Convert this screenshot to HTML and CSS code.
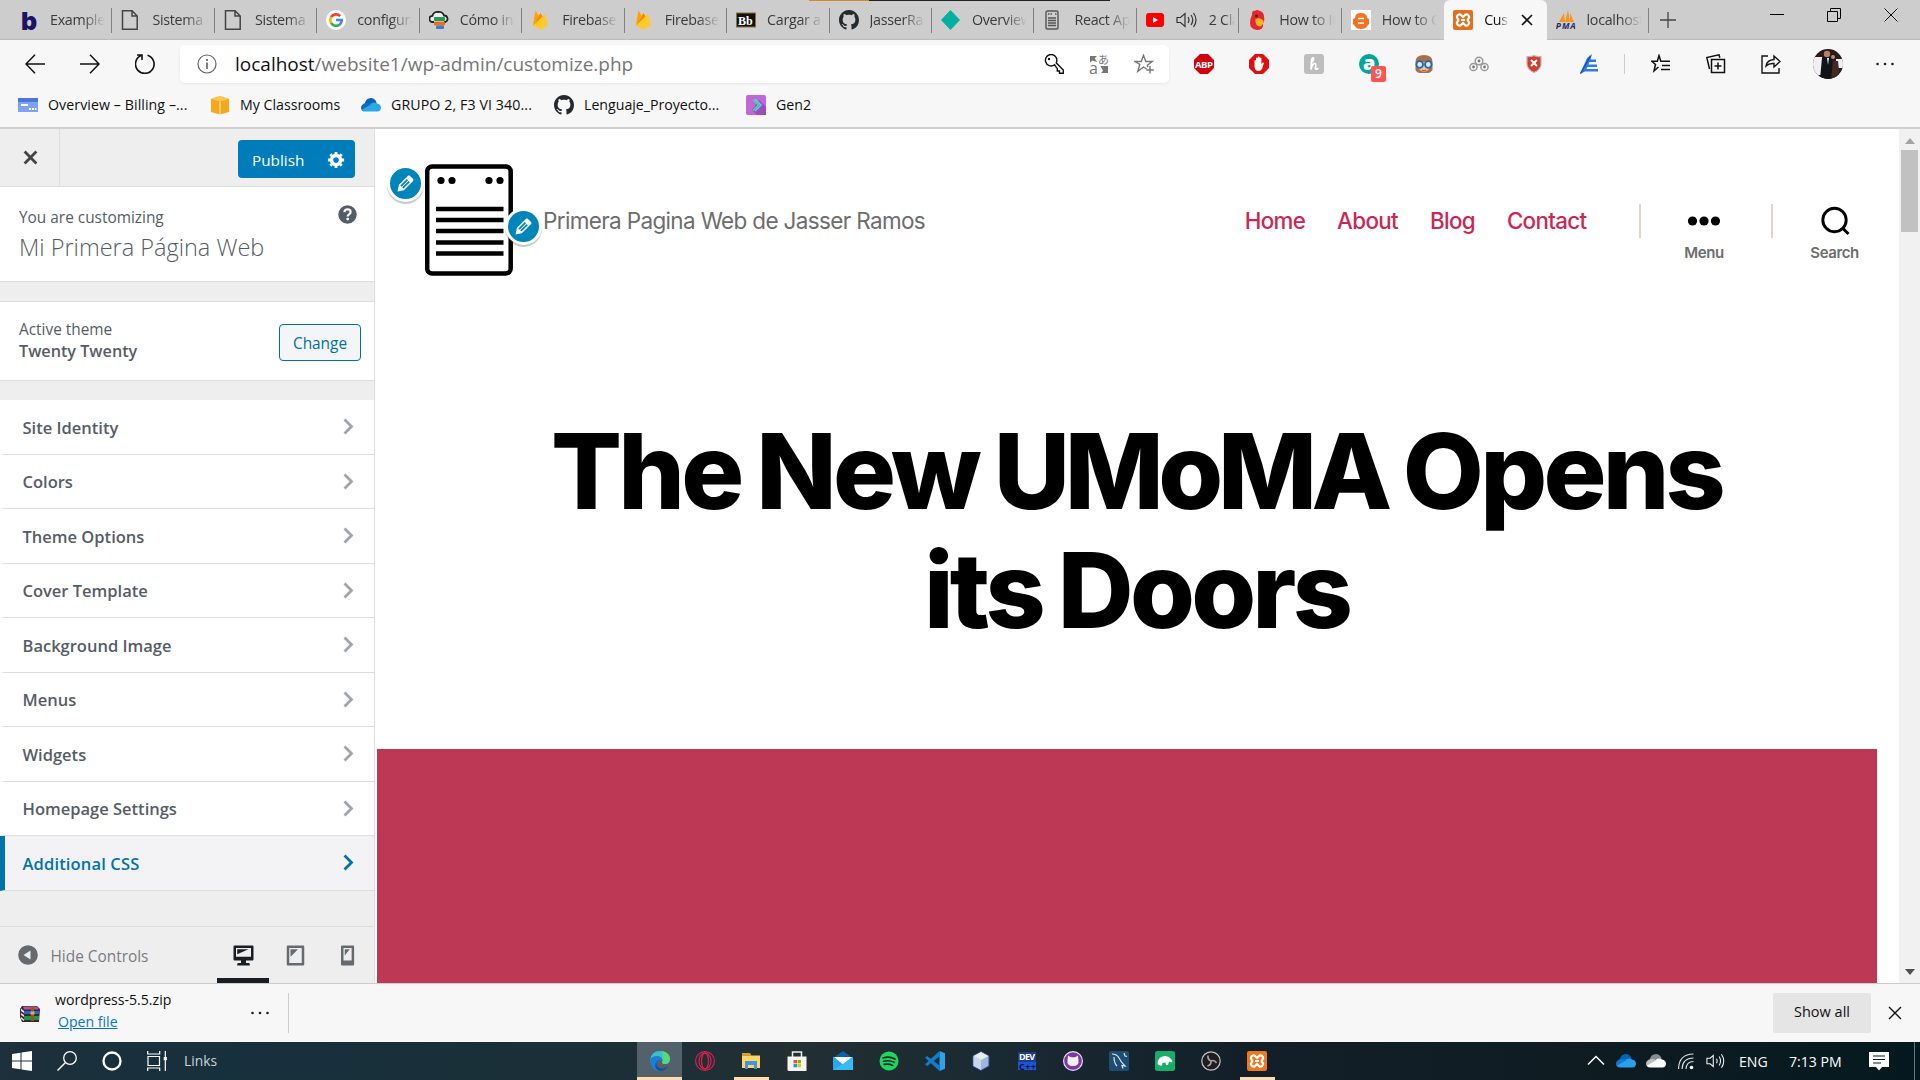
FILE: index.html
```html
<!DOCTYPE html>
<html lang="en">
<head>
<meta charset="utf-8">
<title>Customize: Mi Primera Página Web</title>
<link rel="stylesheet" href="styles.css">
</head>
<body>
<div class="screen">
  <header class="tabstrip">
    <div class="top-sliver"></div>
    <div class="tab"><svg class="fav" viewBox="0 0 20 20"><text x="2" y="19.500" class="glyph-b">b</text></svg><span class="tab-text">Example</span></div>
    <div class="tab"><svg class="fav" viewBox="0 0 20 20"><path d="M1.500 .7h9.500l5.200 5.300v13.300H1.500zM11 .7V6h5.200" fill="none" stroke="#444" stroke-width="1.500"/></svg><span class="tab-text">Sistema de</span></div>
    <div class="tab"><svg class="fav" viewBox="0 0 20 20"><path d="M1.500 .7h9.500l5.200 5.300v13.300H1.500zM11 .7V6h5.200" fill="none" stroke="#444" stroke-width="1.500"/></svg><span class="tab-text">Sistema</span></div>
    <div class="tab"><svg class="fav" viewBox="0 0 20 20"><circle cx="10" cy="10" r="10" fill="#fff"/><g fill="none" stroke-width="2.600"><path d="M14.200 6.200A5.800 5.800 0 0 0 5 7.200" stroke="#ea4335"/><path d="M5 7.200a5.800 5.800 0 0 0 0 5.600" stroke="#fbbc05"/><path d="M5 12.800a5.800 5.800 0 0 0 8.800 1.600" stroke="#34a853"/><path d="M10 10h5.800a5.800 5.800 0 0 1-2 4.400" stroke="#4285f4"/></g></svg><span class="tab-text">configurar</span></div>
    <div class="tab"><svg class="fav" viewBox="0 0 20 20"><path d="M5 12H3.500a3 3 0 0 1 0-6.200A5 5 0 0 1 9 2a5.200 5.200 0 0 1 6 3.500 3.400 3.400 0 0 1 1.500 6.500H15" fill="#eee" stroke="#222" stroke-width="1.800"/><rect x="5" y="7" width="11" height="4" rx="1" fill="#1f9b5c"/><rect x="5" y="11.500" width="11" height="4" rx="1" fill="#f06a1c"/><rect x="7" y="15.500" width="8" height="3.500" rx="1" fill="#3b7cc2"/></svg><span class="tab-text">Cómo instalar</span></div>
    <div class="tab"><svg class="fav" viewBox="0 0 20 20"><path d="M2 15.500 4.500.8l3 5L9.500 3l2 3.500 2.700-2.500L16.800 15.500 9.400 19.500z" fill="#ffc928"/><path d="M2 15.500 4.500.8l3 5z" fill="#ffa000"/><path d="m2 15.500 7.500-12.500 2 3.500z" fill="#f8890d"/></svg><span class="tab-text">Firebase c</span></div>
    <div class="tab"><svg class="fav" viewBox="0 0 20 20"><path d="M2 15.500 4.500.8l3 5L9.500 3l2 3.500 2.700-2.500L16.800 15.500 9.400 19.500z" fill="#ffc928"/><path d="M2 15.500 4.500.8l3 5z" fill="#ffa000"/><path d="m2 15.500 7.500-12.500 2 3.500z" fill="#f8890d"/></svg><span class="tab-text">Firebase</span></div>
    <div class="tab"><svg class="fav" viewBox="0 0 20 20"><rect x=".5" y="3" width="19" height="14" fill="#111" stroke="#8a7233"/><text x="2" y="14.500" class="glyph-bb">Bb</text></svg><span class="tab-text">Cargar a</span></div>
    <div class="tab"><svg class="fav" viewBox="0 0 16 16"><path fill="#24292e" d="M8 0C3.580 0 0 3.580 0 8c0 3.540 2.290 6.530 5.470 7.590.4.070.55-.17.55-.38 0-.19-.01-.82-.01-1.490-2.010.37-2.530-.49-2.690-.94-.09-.23-.48-.94-.82-1.130-.28-.15-.68-.52-.01-.53.63-.01 1.080.58 1.230.82.72 1.210 1.870.87 2.330.66.07-.52.28-.87.51-1.070-1.780-.2-3.640-.89-3.640-3.950 0-.87.31-1.590.82-2.150-.08-.2-.36-1.020.08-2.120 0 0 .67-.21 2.200.82.64-.18 1.320-.27 2-.27.68 0 1.360.09 2 .27 1.530-1.040 2.200-.82 2.200-.82.44 1.100.16 1.920.08 2.120.51.56.82 1.270.82 2.150 0 3.070-1.870 3.750-3.650 3.950.29.25.54.73.54 1.480 0 1.070-.01 1.930-.01 2.200 0 .21.15.46.55.38A8.013 8.013 0 0016 8c0-4.420-3.580-8-8-8z"/></svg><span class="tab-text">JasserRam</span></div>
    <div class="tab"><svg class="fav" viewBox="0 0 20 20"><path d="m9.500 0 9.500 10-9.500 10L0 10z" fill="#00b0a0"/></svg><span class="tab-text">Overview</span></div>
    <div class="tab"><svg class="fav" viewBox="0 0 20 20"><rect x="3" y="1" width="12" height="18" rx="1.500" fill="none" stroke="#555" stroke-width="1.400"/><path d="M5 4h1.500m1 0H9m3 0h1.500M5 8h8M5 10.500h8M5 13h8M5 15.500h8" stroke="#555" stroke-width="1.600"/></svg><span class="tab-text">React App</span></div>
    <div class="tab"><svg class="fav" viewBox="0 0 20 20"><rect x="0" y="3" width="18" height="14" rx="3" fill="#f00"/><path d="m7 7 5 3-5 3z" fill="#fff"/></svg><svg class="audio" viewBox="0 0 22 20"><path d="M1 7.500h3.500L9 3.500v13L4.500 12.500H1zM12 7q2 3 0 6M15 5q3.500 5 0 10M17.500 3q5 7 0 14" fill="none" stroke="#333" stroke-width="1.200"/></svg><span class="tab-text tab-short">2 Cla</span></div>
    <div class="tab"><svg class="fav" viewBox="0 0 20 20"><path d="M4 5Q4 0 7 1q1-2 5 0 4 1 4 6 1 4-1 6 1 7-6 7-7-1-7-7 0-4 2-8z" fill="#e7262b"/><path d="M7.500 9q4-2 8 1.500 0 6-4.500 6-4-1-3.500-7.500z" fill="#ffb51e"/><circle cx="8.500" cy="6" r="1.500" fill="#4a2030"/></svg><span class="tab-text">How to In</span></div>
    <div class="tab tab-plain"><svg class="fav" viewBox="0 0 20 20"><path fill="#fff" d="M0 0h20v20H0z"/><path d="M4 8q0-5 6-5t6 5l2 1v5l-2 2q-1 3-6 3t-6-3l-2-2V9z" fill="#f37321"/><path d="M7 8.500h6M7 13h6" stroke="#fff" stroke-width="1.500"/></svg><span class="tab-text">How to Cr</span></div>
    <div class="tab tab-active"><svg class="fav" viewBox="0 0 20 20"><rect width="20" height="20" rx="2" fill="#e2711d"/><path d="M6 4.500a2.500 2.500 0 0 0-1.500 4q1.500 1.500 0 3A2.500 2.500 0 0 0 8 15l2-2 2 2a2.500 2.500 0 0 0 3.500-3.500q-1.500-1.500 0-3A2.500 2.500 0 0 0 12 5l-2 2-2-2q-1-.7-2-.5zM8 10h4" fill="none" stroke="#fff" stroke-width="2.200"/></svg><span class="tab-text">Cust</span><svg class="tab-x" viewBox="0 0 12 12"><path d="m1 1 10 10M11 1 1 11" stroke="#111" stroke-width="1.600"/></svg></div>
    <div class="tab"><svg class="fav" viewBox="0 0 20 20"><path d="M3 12 8 3l1 9zM9 12l3-12 2 12zM14 12V3l4 9z" fill="#f7941d"/><text x="-.3" y="19" class="glyph-pma" textLength="20">PMA</text></svg><span class="tab-text">localhost</span></div>
    <svg class="plus" viewBox="0 0 16 16"><path d="M8 0v16M0 8h16" stroke="#444" stroke-width="1.300"/></svg>
    <div class="window-controls">
      <svg viewBox="0 0 14 14"><path d="M0 6.500h14" stroke="#000"/></svg>
      <svg viewBox="0 0 14 14"><path d="M.5 3.500h10v10H.5zM3.500 3.500v-3h10v10h-3" fill="none" stroke="#000"/></svg>
      <svg viewBox="0 0 14 14"><path d="m.5.5 13 13M13.500.5l-13 13" stroke="#000"/></svg>
    </div>
  </header>

  <div class="toolbar">
    <svg class="nav-ic" viewBox="0 0 20 20"><path d="M20 10H1M10 .8 1 10l9 9.200" fill="none" stroke="#111" stroke-width="1.500"/></svg>
    <svg class="nav-ic" viewBox="0 0 20 20"><path d="M0 10h19M10 .8l9 9.200-9 9.200" fill="none" stroke="#111" stroke-width="1.500"/></svg>
    <svg class="nav-ic" viewBox="0 0 20 20"><path d="M12.500 1.200A9.300 9.300 0 1 1 6 1.600M2 1h5v5" fill="none" stroke="#111" stroke-width="1.600"/></svg>
    <div class="address">
      <svg class="info" viewBox="0 0 20 20"><circle cx="10" cy="10" r="9" fill="none" stroke="#666" stroke-width="1.200"/><path d="M10 8.500V15M10 5v2" stroke="#555" stroke-width="1.500"/></svg>
      <span class="url"><b>localhost</b>/website1/wp-admin/customize.php</span>
      <div class="address-icons">
        <svg viewBox="0 0 20 20"><path d="M10.500 10.800a5.700 5.700 0 1 1 1.700-2l7.100 7.300v3.200h-3.800v-2.300h-2.200v-2.300z" fill="none" stroke="#111" stroke-width="1.400"/><circle cx="5" cy="5" r="1.200" fill="#111"/></svg>
        <svg viewBox="0 0 20 20"><path d="M1 2h7L5.800 4.200 8 8 3.500 6.500 1 8.500zM11.500 12H19v7h-7l2-2.200z" fill="#777"/><text x="0" y="19.500" class="glyph-tr">a</text><text x="9" y="10" class="glyph-ja">あ</text></svg>
        <svg viewBox="0 0 20 20"><path d="m12.500 15-3-2-5.700 4.400 2-7L.8 7.500h6.500L9.500 1.300l2.300 6.200h6.400l-4.800 3.700.4 2M16 12v7.500M12.300 16h7.500" fill="none" stroke="#777" stroke-width="1.400"/></svg>
      </div>
    </div>
    <div class="extensions">
      <svg viewBox="0 0 20 20"><path d="M6 0h8l6 6v8l-6 6H6l-6-6V6z" fill="#d1000f"/><text x="1" y="13.600" class="glyph-abp" textLength="18">ABP</text></svg>
      <svg viewBox="0 0 20 20"><path d="M6 0h8l6 6v8l-6 6H6l-6-6V6z" fill="#e40d0d"/><path d="M5.500 12V6.500q.8-1 1.500 0V9 4q.9-1 1.800 0v4V3q.9-1 1.800 0v5V4q.9-1 1.800 0v6.500l1-1.800q1.200-.5 1.400.5L13 15q-1 2-3.500 2-4 0-4-5z" fill="#fff"/></svg>
      <svg viewBox="0 0 20 20"><rect width="20" height="20" rx="3" fill="#bdbdbd"/><path d="M6.500 9Q10 7 9.500 4q-1.500-1-2 3L7 15.500Q8.500 9 11 9.500q1.500.5.300 5 .7 2 3.200-.5" fill="none" stroke="#fff" stroke-width="1.700"/></svg>
      <div class="ext-badged"><svg viewBox="0 0 20 20"><circle cx="10" cy="10" r="10" fill="#00a699"/><text x="4" y="15.500" class="glyph-a">a</text></svg><span class="badge">9</span></div>
      <svg viewBox="0 0 20 20"><path d="M1.500 16V8q0-7 8.500-7t8.500 7v8q-2 3-4 3H6q-3 0-4.500-3z" fill="#a8714b"/><path d="M5 8h10v7q-5 6-10 0z" fill="#f2c19c"/><g fill="#d5ecff" stroke="#2465b5" stroke-width="1.800"><circle cx="5.700" cy="10.500" r="3.300"/><circle cx="14.300" cy="10.500" r="3.300"/></g><path d="M8 16q2 1.500 4 0" stroke="#e54b4b" stroke-width="1.300" fill="none"/></svg>
      <svg viewBox="0 0 20 20"><g fill="none" stroke="#999" stroke-width="1.500"><circle cx="10" cy="7" r="3.800"/><circle cx="4.500" cy="13" r="3.600"/><circle cx="15.500" cy="13" r="3.600"/></g><g fill="#777"><circle cx="10" cy="7" r="1.400"/><circle cx="4.500" cy="13" r="1.400"/><circle cx="15.500" cy="13" r="1.400"/></g></svg>
      <svg viewBox="0 0 20 20"><path d="M3 2.500q4 .5 7-1 3 1.500 7 1V11q-1 5-7 7.500Q4 16 3 11z" fill="#d33b2f" stroke="#bbb" stroke-width="1.200"/><path d="m7 6 6 6m0-6-6 6" stroke="#fff" stroke-width="2"/></svg>
      <svg viewBox="0 0 20 20"><path d="M1 20 8 4l5-4-1.500 5.500H17V8h-6.500L9.500 10.500H18V13H8.500l-1 2H19v2.500H6z" fill="#2f7de1"/><path d="M1.500 19.500 11.500 2" stroke="#1552a8" stroke-width="1.400"/></svg>
    </div>
    <span class="tool-sep"></span>
    <div class="browser-actions">
      <svg viewBox="0 0 20 20"><path d="M7.500 13 3 17l1.500-6.500L.8 7.300h5.500L8 1.500l1.800 5.800H19M11 11.500h8M10 15.500h9" fill="none" stroke="#111" stroke-width="1.500"/></svg>
      <svg viewBox="0 0 20 20"><path d="M5.500 5.500h13v13h-13zM12 8.500v7M8.500 12h7M3.500 15 .8 3.500 13 .8l.8 3" fill="none" stroke="#111" stroke-width="1.500"/></svg>
      <svg viewBox="0 0 20 20"><path d="M7 2H1v17h17v-5M5 12q1-6 8-6.500V2l6 5.500-6 5.500V9.500Q8 9 5 12z" fill="none" stroke="#111" stroke-width="1.400"/></svg>
      <svg class="avatar" viewBox="0 0 30 30"><clipPath id="face"><circle cx="15" cy="15" r="15"/></clipPath><g clip-path="url(#face)"><path fill="#2a1a18" d="M0 0h30v30H0z"/><path d="M0 8h9l2 6-3 12H0zM23 10h7v9h-7z" fill="#f2eef2"/><path d="M9 9q5-4 10 1l2 20H7z" fill="#11131a"/><circle cx="14" cy="5" r="3.200" fill="#b5806a"/><circle cx="20" cy="8" r="2" fill="#bd8972"/><path d="m14 9 1 7 1-7z" fill="#eee"/><path d="M20 12h5l2 18h-9z" fill="#432921"/></g></svg>
      <svg viewBox="0 0 20 20"><g fill="#222"><circle cx="2.500" cy="10" r="1.300"/><circle cx="10" cy="10" r="1.300"/><circle cx="17.500" cy="10" r="1.300"/></g></svg>
    </div>
  </div>

  <nav class="bookmarks">
    <a class="bm bm1"><svg viewBox="0 0 20 20"><path fill="#4a76e0" d="M0 3h20v4H0z"/><path fill="#7fa3f2" d="M0 7h20v10H0z"/><path d="M3 10h7M11 14h2m1 0h2m1 0h1.500" stroke="#fff" stroke-width="2"/></svg><span>Overview – Billing –...</span></a>
    <a class="bm bm2"><svg viewBox="0 0 20 20"><path d="m10 1 9 3v13l-9 2.500L1 17V4z" fill="#f5a81c"/><path d="m1 4 9 2.500L19 4l-9-3z" fill="#ffc64d"/><path d="M10 6.500v13" stroke="#fff3d6"/></svg><span>My Classrooms</span></a>
    <a class="bm bm3"><svg viewBox="0 0 20 20"><path d="M4 8a6 6 0 0 1 11-2l1 4-8 4z" fill="#0364b8"/><path d="M4.500 8Q8 7 10 9.500l-7 7Q0 15.500 0 12.500T4.500 8z" fill="#0f6cbd"/><path d="M9 10q3-4 7-1.500Q20 9 20 13q-.5 3.500-3.500 3.500H4Q2 16 1 14.500z" fill="#28a8ea"/></svg><span>GRUPO 2, F3 VI 340...</span></a>
    <a class="bm bm4"><svg viewBox="0 0 16 16"><path fill="#24292e" d="M8 0C3.580 0 0 3.580 0 8c0 3.540 2.290 6.530 5.470 7.590.4.070.55-.17.55-.38 0-.19-.01-.82-.01-1.490-2.010.37-2.530-.49-2.690-.94-.09-.23-.48-.94-.82-1.130-.28-.15-.68-.52-.01-.53.63-.01 1.080.58 1.230.82.72 1.210 1.870.87 2.330.66.07-.52.28-.87.51-1.070-1.780-.2-3.640-.89-3.640-3.950 0-.87.31-1.590.82-2.150-.08-.2-.36-1.020.08-2.120 0 0 .67-.21 2.200.82.64-.18 1.320-.27 2-.27.68 0 1.360.09 2 .27 1.530-1.040 2.200-.82 2.200-.82.44 1.100.16 1.920.08 2.120.51.56.82 1.270.82 2.150 0 3.070-1.870 3.750-3.650 3.950.29.25.54.73.54 1.480 0 1.070-.01 1.930-.01 2.200 0 .21.15.46.55.38A8.013 8.013 0 0016 8c0-4.420-3.580-8-8-8z"/></svg><span>Lenguaje_Proyecto...</span></a>
    <a class="bm bm5"><svg viewBox="0 0 20 20"><rect width="20" height="20" rx="2" fill="#c066d6"/><path d="m13 5 7 7v8h-9l-5-5z" fill="#a04cb8"/><path d="m7 4.500 5.500 5.500L7 15.500" fill="none" stroke="#35e08b" stroke-width="1.600"/><path d="m9 4 6 6-6 6" fill="none" stroke="#4fd2ff" stroke-width="1.500"/></svg><span>Gen2</span></a>
  </nav>

  <main class="content">
    <aside class="sidebar">
      <div class="side-head">
        <div class="close"><svg viewBox="0 0 14 14"><path d="m1.500 1.500 11 11m0-11-11 11" stroke="#444" stroke-width="2.600"/></svg></div>
        <div class="publish"><span>Publish</span><svg viewBox="0 0 20 20"><path fill="#fff" d="M18 12h-2.180c-.17.7-.44 1.350-.81 1.930l1.540 1.540-2.100 2.100-1.540-1.540c-.58.36-1.230.63-1.910.79V19H8v-2.180c-.68-.16-1.330-.43-1.910-.79l-1.540 1.540-2.120-2.120 1.540-1.540c-.36-.58-.63-1.230-.79-1.910H1V9.030h2.170c.16-.7.44-1.350.8-1.940L2.430 5.550l2.100-2.100 1.540 1.540c.58-.37 1.240-.64 1.930-.81V2h3v2.180c.68.16 1.330.43 1.910.79l1.540-1.540 2.120 2.120-1.540 1.540c.36.59.64 1.240.8 1.940H18V12zm-8.500 1.500c1.660 0 3-1.340 3-3s-1.340-3-3-3-3 1.340-3 3 1.340 3 3 3z"/></svg></div>
      </div>
      <section class="panel-intro">
        <div><p class="small">You are customizing</p><h2>Mi Primera Página Web</h2></div>
        <svg class="help" viewBox="0 0 20 20"><circle cx="10" cy="10" r="9.700" fill="#555d66"/><path d="M6.700 7.500q.3-3 3.400-3 3.200.2 3.200 2.800 0 1.500-1.500 2.400-1.600 1-1.600 2.300" fill="none" stroke="#fff" stroke-width="2.300"/><circle cx="10.200" cy="14.800" r="1.500" fill="#fff"/></svg>
      </section>
      <section class="panel-theme">
        <div><p class="small">Active theme</p><h3>Twenty Twenty</h3></div>
        <button class="change">Change</button>
      </section>
      <ul class="menu">
        <li><span>Site Identity</span><svg viewBox="0 0 11 17"><path d="m1.500 1.500 7 7-7 7"/></svg></li>
        <li><span>Colors</span><svg viewBox="0 0 11 17"><path d="m1.500 1.500 7 7-7 7"/></svg></li>
        <li><span>Theme Options</span><svg viewBox="0 0 11 17"><path d="m1.500 1.500 7 7-7 7"/></svg></li>
        <li><span>Cover Template</span><svg viewBox="0 0 11 17"><path d="m1.500 1.500 7 7-7 7"/></svg></li>
        <li><span>Background Image</span><svg viewBox="0 0 11 17"><path d="m1.500 1.500 7 7-7 7"/></svg></li>
        <li><span>Menus</span><svg viewBox="0 0 11 17"><path d="m1.500 1.500 7 7-7 7"/></svg></li>
        <li><span>Widgets</span><svg viewBox="0 0 11 17"><path d="m1.500 1.500 7 7-7 7"/></svg></li>
        <li><span>Homepage Settings</span><svg viewBox="0 0 11 17"><path d="m1.500 1.500 7 7-7 7"/></svg></li>
        <li class="current"><span>Additional CSS</span><svg viewBox="0 0 11 17"><path d="m1.500 1.500 7 7-7 7"/></svg></li>
      </ul>
      <footer class="side-foot">
        <svg class="collapse" viewBox="0 0 20 20"><circle cx="10" cy="10" r="9.800" fill="#656a6f"/><path d="m12.500 5.500v9L5.500 10z" fill="#eee"/></svg>
        <span class="hide">Hide Controls</span>
        <div class="device on"><svg viewBox="0 0 20 20"><path fill="#191e23" d="M3 2h14c.55 0 1 .45 1 1v10c0 .55-.45 1-1 1h-5v2h2c.55 0 1 .45 1 1v1H5v-1c0-.55.45-1 1-1h2v-2H3c-.55 0-1-.45-1-1V3c0-.55.45-1 1-1zm13 9V4H4v7h12zM5 5h9L5 9V5z"/></svg></div>
        <div class="device"><svg viewBox="0 0 20 20"><path fill="#656a6f" d="M4 2h12c.55 0 1 .45 1 1v14c0 .55-.45 1-1 1H4c-.55 0-1-.45-1-1V3c0-.55.45-1 1-1zm11 14V4H5v12h10zM6 5h6l-6 6V5z"/></svg></div>
        <div class="device"><svg viewBox="0 0 20 20"><path fill="#656a6f" d="M5 2h8.500c.55 0 1 .45 1 1v14c0 .55-.45 1-1 1H5c-.55 0-1-.45-1-1V3c0-.55.45-1 1-1zm7.500 12V4H6v10h6.500zM7 5h4l-4 5V5z"/></svg></div>
      </footer>
    </aside>

    <section class="preview">
      <div class="site-head">
        <div class="logo">
          <svg viewBox="0 0 88 112"><rect x="2.200" y="2.500" width="83.500" height="107" rx="5" fill="#fff" stroke="#000" stroke-width="4.500"/><g><circle cx="16" cy="16.500" r="3.600"/><circle cx="27" cy="16.500" r="3.600"/><circle cx="64" cy="16.500" r="3.600"/><circle cx="75" cy="16.500" r="3.600"/></g><path d="M11 45h67.500M11 56h67.500M11 67h67.500M11 78.500h67.500M11 89.500h67.500" stroke="#000" stroke-width="4.600"/></svg>
          <span class="edit edit-logo"><svg viewBox="0 0 20 20"><path fill="#fff" d="M13.890 3.390l2.710 2.720c.46.46.42 1.240.03 1.640l-8.010 8.020-5.560 1.160 1.160-5.580s7.600-7.630 7.990-8.030c.39-.39 1.220-.39 1.680.07zm-2.730 2.790l-5.590 5.610 1.110 1.110 5.540-5.650zm-2.970 8.230l5.580-5.600-1.070-1.080-5.590 5.600z"/></svg></span>
          <span class="edit edit-tagline"><svg viewBox="0 0 20 20"><path fill="#fff" d="M13.890 3.390l2.710 2.720c.46.46.42 1.240.03 1.640l-8.010 8.020-5.560 1.160 1.160-5.580s7.600-7.630 7.990-8.030c.39-.39 1.220-.39 1.680.07zm-2.730 2.790l-5.590 5.610 1.110 1.110 5.540-5.650zm-2.970 8.230l5.580-5.600-1.070-1.080-5.590 5.600z"/></svg></span>
        </div>
        <p class="tagline">Primera Pagina Web de Jasser Ramos</p>
        <nav class="site-nav"><a>Home</a><a>About</a><a>Blog</a><a>Contact</a></nav>
        <div class="toggle t-menu"><svg viewBox="0 0 34 34"><circle cx="5.500" cy="17" r="4.600"/><circle cx="17" cy="17" r="4.600"/><circle cx="28.500" cy="17" r="4.600"/></svg><span>Menu</span></div>
        <div class="toggle t-search"><svg viewBox="0 0 34 34"><circle cx="16.500" cy="16" r="11.700" fill="none" stroke="#000" stroke-width="2.900"/><path d="m24.500 24 6 6" stroke="#000" stroke-width="3"/></svg><span>Search</span></div>
      </div>
      <h1>The New <span class="tight">UMoMA</span> Opens<br>its Doors</h1>
      <div class="hero"></div>
    </section>
    <div class="scrollbar"><svg viewBox="0 0 10 6"><path d="m0 6 5-6 5 6z" fill="#a3a3a3"/></svg><div class="thumb"></div><svg class="down" viewBox="0 0 10 6"><path d="m0 0 5 6 5-6z" fill="#505050"/></svg></div>
  </main>

  <div class="downloads">
    <svg class="rar" viewBox="0 0 20 17"><path d="M2 1h15l3 3-1 13H2L0 12V4z" fill="#3a2733"/><path d="M3 1.500h14l2 3H4z" fill="#b2519b"/><path d="M4 6h15v3H4z" fill="#2563d8"/><path d="M4 11h15v4H4z" fill="#1c9a3b"/><path d="M1 3.500 4 6v2L1 6zM1 8l3 2v2L1 10zM1 12l3 2.500v1.500l-3-2z" fill="#e8e8e8"/><path d="M11 1h3v15h-3z" fill="#8a5a2a"/><path d="M10.500 6.500h4v3h-4z" fill="#d9b34a"/></svg>
    <div class="dl-text"><span class="dl-name">wordpress-5.5.zip</span><a class="dl-open">Open file</a></div>
    <svg class="dl-more" viewBox="0 0 20 20"><g fill="#222"><circle cx="2.500" cy="10" r="1.300"/><circle cx="10" cy="10" r="1.300"/><circle cx="17.500" cy="10" r="1.300"/></g></svg>
    <span class="dl-sep"></span>
    <button class="show-all">Show all</button>
    <svg class="dl-x" viewBox="0 0 14 14"><path d="m1 1 12 12m0-12L1 13" stroke="#111" stroke-width="1.400"/></svg>
  </div>

  <footer class="taskbar">
    <div class="start">
      <svg viewBox="0 0 20 20"><path d="m0 3 8.500-1.200v7.700H0zM9.500 1.600 20 0v9.500H9.500zM0 10.500h8.500v7.700L0 17zM9.500 10.500H20V20L9.500 18.400z" fill="#fff"/></svg>
      <svg viewBox="0 0 20 20"><circle cx="13" cy="7" r="6.300" fill="none" stroke="#fff" stroke-width="1.300"/><path d="m8.500 11.500-8 8" stroke="#fff" stroke-width="1.400"/></svg>
      <svg viewBox="0 0 20 20"><circle cx="10" cy="10" r="8.500" fill="none" stroke="#fff" stroke-width="2.300"/></svg>
      <svg viewBox="0 0 20 20"><path d="M1 5.500h11.500v9H1zM.7 0v3h12V0M.7 20v-3h12v3M18.300 0v20" fill="none" stroke="#fff" stroke-width="1.200"/><path d="M16.700 6h3.200v3.200h-3.200z" fill="#fff"/></svg>
      <span class="links">Links</span>
    </div>
    <div class="apps">
      <div class="app focus run"><svg viewBox="0 0 20 20"><path d="M0 9.500Q1 0 10 0q9.500.5 10 8 0 5-5.500 5-3.500-.3-2-3 0-3-4-3Q3 6 0 9.500z" fill="#35bfd0"/><path d="M11 .1Q19.500 1 20 8q0 5-5.500 5-3.500-.3-2-3 .5-1.500-.5-2.500Q14 4 11 .1z" fill="#57d977"/><path d="M0 10q1-5 7-5 6 .3 5.500 5-1.500-1.500-3.500-1-3 1-2.500 5 .5 3.500 4 6Q1 20 0 10z" fill="#1b7fd6"/><path d="M9 9q-4.500 2-1.500 6.500Q11 20 18.500 15 15 20 10 20 4 18 5.500 12.500 6.500 9.500 9 9z" fill="#114f9e"/></svg></div>
      <div class="app"><svg viewBox="0 0 20 20"><g fill="none" stroke="#d8204c"><circle cx="10" cy="10" r="9.400" stroke-width="1.200"/><ellipse cx="10" cy="10" rx="6" ry="8" stroke-width="1.200"/><ellipse cx="10" cy="10" rx="3.500" ry="8" stroke-width="1.300"/></g></svg></div>
      <div class="app run"><svg viewBox="0 0 20 20"><path d="M1 2h8l1.500 2.500H1z" fill="#e0a020"/><path d="M1 4.500h18V17H1z" fill="#ffd566"/><path d="M4 18v-8h12v8h-3v-4H7v4z" fill="#3d94e8"/></svg></div>
      <div class="app"><svg viewBox="0 0 20 20"><path d="M5.500 6V1h9v5" fill="none" stroke="#eee" stroke-width="1.500"/><path d="M.5 5.500h19V20H2Q.5 20 .5 18.500z" fill="#f3f3f3"/><path d="M6.500 9H10v3.300H6.500z" fill="#f25022"/><path d="M10.500 9H14v3.300h-3.500z" fill="#7fba00"/><path d="M6.500 13H10v3.300H6.500z" fill="#00a4ef"/><path d="M10.500 13H14v3.300h-3.500z" fill="#ffb900"/></svg></div>
      <div class="app"><svg viewBox="0 0 20 20"><path d="m0 7 10-7 10 7z" fill="#0f5fb0"/><path d="M0 6h20v13H0z" fill="#2aa5ee"/><path d="M1 6h18l-9 7.500z" fill="#fff"/><path d="m0 19 20-12.500V19z" fill="#35bcf5"/></svg></div>
      <div class="app"><svg viewBox="0 0 20 20"><circle cx="10" cy="10" r="9.500" fill="#1ed760"/><path d="M4 7q6.500-2 12 1M4.500 10.300q5.500-1.500 10.500 1M5.200 13.400q4.500-1 8.500 1" fill="none" stroke="#17262a" stroke-width="1.700" stroke-linecap="round"/></svg></div>
      <div class="app"><svg viewBox="0 0 20 20"><path d="M14.500 0 20 2.200v15.600L14.500 20z" fill="#2ba3ee"/><path d="M14.500 0v5.500L2.200 15 0 13.200zM0 6.800 2.200 5l12.300 9.500V20z" fill="#0f7ecb"/></svg></div>
      <div class="app"><svg viewBox="0 0 20 20"><path d="m10 .5 8 4.500v10l-8 4.500L2 15V5z" fill="#9db8dc" stroke="#32458e"/><path d="m10 1 7.500 4-7.500 4-7.500-4z" fill="#e4f0e9"/><path d="M2.500 5 10 9v10l-7.500-4z" fill="#c8d8ec"/></svg></div>
      <div class="app"><svg viewBox="0 0 20 20"><path fill="#243b8d" d="M1 1h18v10H1z"/><path fill="#1d56d6" d="M1 11h18v8H1z"/><text x="2" y="9" class="glyph-dev" textLength="16">DEV</text><text x="2" y="18.500" class="glyph-cpp" textLength="17">C++</text></svg></div>
      <div class="app"><svg viewBox="0 0 20 20"><circle cx="10" cy="10" r="9.400" fill="#7b37a5" stroke="#e8dff0" stroke-width="1.200"/><path d="m5 4.500 3 1.700h4l3-1.700.5 4.500q1 6-5.500 6t-5.500-6z" fill="#f4eff8"/></svg></div>
      <div class="app"><svg viewBox="0 0 20 20"><rect width="20" height="20" rx="2" fill="#1d4d74"/><path d="M3 3q5 0 7 4t6 8l-3-.5 1 3M5 6q0 6 3 9M15 2l1 3 2 .5" fill="none" stroke="#dbe8f2" stroke-width="1.200"/></svg></div>
      <div class="app"><svg viewBox="0 0 20 20"><rect width="20" height="20" rx="2.500" fill="#18ad68"/><path d="M2.500 13q0-6 5-7.500Q13 4 16 8l1.500 2-1 1.500-2.500-1-1 3.500h-2l-.5-2.500-3 .5-.5 2.500H5z" fill="#fff"/></svg></div>
      <div class="app"><svg viewBox="0 0 20 20"><circle cx="10" cy="10" r="9.200" fill="#1f1d22" stroke="#c4c4c4" stroke-width="1.200"/><path d="M7 4.500Q6.500 8.500 10 10q3.500-1.500 5.500 2M10 10q.5 4-3.500 5" fill="none" stroke="#a5a5a8" stroke-width="1.600"/></svg></div>
      <div class="app run"><svg viewBox="0 0 20 20"><rect width="20" height="20" rx="2" fill="#f0781e"/><path d="M6 4.500a2.500 2.500 0 0 0-1.500 4q1.500 1.500 0 3A2.500 2.500 0 0 0 8 15l2-2 2 2a2.500 2.500 0 0 0 3.500-3.500q-1.500-1.500 0-3A2.500 2.500 0 0 0 12 5l-2 2-2-2q-1-.7-2-.5zM8 10h4" fill="none" stroke="#fff" stroke-width="2.200"/></svg></div>
    </div>
    <div class="tray">
      <svg viewBox="0 0 20 20"><path d="m2 13.500 8-8 8 8" fill="none" stroke="#fff" stroke-width="1.500"/></svg>
      <svg viewBox="0 0 20 20"><path d="M4 8a6 6 0 0 1 11-2l1 4-8 4z" fill="#0364b8"/><path d="M4.500 8Q8 7 10 9.500l-7 7Q0 15.500 0 12.500T4.500 8z" fill="#0f78d4"/><path d="M9 10q3-4 7-1.500Q20 9 20 13q-.5 3.500-3.500 3.500H4Q2 16 1 14.500z" fill="#28a0ea"/></svg>
      <svg viewBox="0 0 20 20"><path d="M4 8a6 6 0 0 1 11-2l1 4-8 4z" fill="#8a8d90"/><path d="M4.500 8Q8 7 10 9.500l-7 7Q0 15.500 0 12.500T4.500 8z" fill="#bcbec0"/><path d="M9 10q3-4 7-1.500Q20 9 20 13q-.5 3.500-3.500 3.500H4Q2 16 1 14.500z" fill="#fff"/></svg>
      <svg viewBox="0 0 20 20"><path d="M2.500 18Q3 3 17.500 3M6 18Q6.500 7 17.500 7M10 18q.5-7.500 7.500-7.500" fill="none" stroke="#ddd" stroke-width="1.200"/><circle cx="15.500" cy="16.500" r="1.800" fill="#fff"/></svg>
      <svg viewBox="0 0 22 20"><path d="M1 7h3.500L8 4v12l-3.500-3H1zM11.500 7.500q1.500 2.500 0 5M14.500 5q3 5 0 10M17 2.500q5 7.500 0 15" fill="none" stroke="#eee" stroke-width="1.200"/></svg>
      <span class="lang">ENG</span>
      <span class="clock">7:13 PM</span>
      <svg class="notif" viewBox="0 0 20 20"><path d="M0 1h20v15h-7l-3 3.500L7 16H0z" fill="#fff"/><path d="M4 5h12M4 8.500h12M4 12h8" stroke="#0b1c22" stroke-width="1.100"/></svg>
      <span class="peek"></span>
    </div>
  </footer>
</div>
</body>
</html>
```
FILE: styles.css
```css
* { box-sizing: border-box; }
body { margin: 0; font-family: "Open Sans", "Noto Sans", sans-serif; color: #222; overflow: hidden; }
p, h1, h2, h3, ul { margin: 0; padding: 0; }
svg { display: block; flex: none; }
button { font-family: inherit; padding: 0; }
.screen { width: 1920px; height: 1080px; display: flex; flex-direction: column; background: #f7f7f7; }

/* tab strip */
.tabstrip { position: relative; height: 40px; display: flex; align-items: center; padding-left: 10px; background: #cdcdcd; box-shadow: inset 0 -2px 1px -1px #bbb; }
.top-sliver { position: absolute; left: 809px; top: 0; width: 301px; height: 1px; background: linear-gradient(90deg, #d08a2b 60px, #222 60px); }
.tab { width: 102.45px; height: 25px; padding-left: 9px; display: flex; align-items: center; border-right: 1px solid #808080; }
.tab-plain { border-right-color: transparent; }
.fav { width: 20px; height: 20px; }
.audio { width: 22px; height: 20px; margin-left: 10px; }
.tab-text { flex: 1; margin: 0 6px 0 11px; overflow: hidden; white-space: nowrap; font-size: 14.3px; letter-spacing: -.3px; line-height: 24px; color: #3a3a3a; -webkit-mask-image: linear-gradient(90deg, #000 60%, transparent); mask-image: linear-gradient(90deg, #000 60%, transparent); }
.tab-short { margin-right: 3px; }
.tab-active { height: 40px; background: #f7f7f7; border-radius: 6px 6px 0 0; border-right: 0; }
.tab-active .tab-text { color: #111; margin-right: 12px; }
.tab-x { width: 12px; height: 12px; margin-right: 14px; }
.plus { width: 16px; height: 16px; margin-left: 11px; }
.window-controls { margin: -11px 22px 0 auto; display: flex; gap: 43px; }
.window-controls svg { width: 14px; height: 14px; }
.glyph-b { font: 900 25px "Inter", sans-serif; fill: #1b1464; }
.glyph-bb { font: bold 12px "Liberation Serif", serif; fill: #fff; }
.glyph-pma { font: italic bold 8.5px "Open Sans", sans-serif; fill: #2a2a66; }
.glyph-tr { font: 16px "Open Sans", sans-serif; fill: #777; }
.glyph-ja { font: 11px "Noto Sans CJK JP", sans-serif; fill: #777; }
.glyph-abp { font: bold 9.5px "Open Sans", sans-serif; fill: #fff; }
.glyph-a { font: 800 20px "Open Sans", sans-serif; fill: #fff; }
.glyph-dev { font: bold 9px "Open Sans", sans-serif; fill: #fff; }
.glyph-cpp { font: bold 9px "Open Sans", sans-serif; fill: #0c1440; }

/* toolbar */
.toolbar { height: 48px; display: flex; align-items: center; padding-left: 25px; }
.nav-ic { width: 20px; height: 20px; margin-right: 35px; }
.address { width: 989px; height: 38px; margin-left: -10px; padding: 0 15px 0 17px; display: flex; align-items: center; background: #fff; border-radius: 5px; box-shadow: 0 1px 3px #0001; }
.info { width: 20px; height: 20px; margin-right: 18px; }
.url { font-size: 19px; line-height: 26px; color: #767676; white-space: nowrap; }
.url b { font-weight: 400; color: #111; }
.address-icons { margin-left: auto; display: flex; gap: 25px; }
.address-icons svg, .extensions svg, .browser-actions svg { width: 20px; height: 20px; }
.extensions { margin-left: 25px; display: flex; gap: 35px; }
.ext-badged { position: relative; }
.badge { position: absolute; left: 12px; top: 12px; width: 15px; height: 16px; border-radius: 2px; background: #ff5252; color: #fff; font-size: 12px; font-weight: 600; line-height: 16px; text-align: center; }
.tool-sep { width: 1px; height: 20px; margin: 0 26px 0 25px; background: #ccc; }
.browser-actions { display: flex; align-items: center; gap: 35px; }
.browser-actions .avatar { width: 30px; height: 30px; margin: 0 -3px 0 -3px; }

.bookmarks { height: 41px; display: flex; align-items: center; padding: 0 0 6px 18px; border-bottom: 2px solid #d0d0d0; }
.bm { display: flex; align-items: center; gap: 10px; font-size: 14.2px; line-height: 20px; color: #111; white-space: nowrap; }
.bm svg { width: 20px; height: 20px; }
.bm1 { width: 192px; letter-spacing: .07px; }
.bm2 { width: 151px; }
.bm3 { width: 193px; letter-spacing: .1px; }
.bm4 { width: 192px; letter-spacing: -.02px; }

/* customizer sidebar */
.content { height: 854px; display: flex; background: #fff; }
.sidebar { width: 375px; display: flex; flex-direction: column; background: #eee; border-right: 1px solid #ddd; color: #555d66; }
.side-head { height: 58px; display: flex; align-items: center; border-bottom: 1px solid #ddd; }
.close { width: 60px; height: 57px; padding-left: 23px; display: flex; align-items: center; border-right: 1px solid #ddd; }
.close svg { width: 15px; height: 15px; }
.publish { width: 117px; height: 38px; margin-left: 178px; margin-top: 3px; padding-left: 14px; display: flex; align-items: center; background: #007cba; border-radius: 4px; color: #fff; font-size: 15.3px; font-weight: 500; }
.publish span { margin-top: 1px; }
.publish svg { width: 19px; height: 19px; margin-left: auto; margin-right: 9px; }
.panel-intro { height: 95px; padding: 18px 17px 0 19px; display: flex; justify-content: space-between; background: #fff; border-bottom: 1px solid #ddd; }
.small { font-size: 15.4px; line-height: 22px; }
.panel-intro .small { padding-top: 2px; }
.panel-intro h2 { font-size: 23.5px; font-weight: 300; line-height: 34px; margin-top: 1px; }
.help { width: 19px; height: 19px; }
.panel-theme { height: 80px; margin-top: 19px; padding: 0 13px 2px 19px; display: flex; align-items: center; justify-content: space-between; background: #fff; border: solid #ddd; border-width: 1px 0; }
.panel-theme h3 { font-size: 16.2px; font-weight: 600; line-height: 21px; }
.change { width: 82px; height: 37px; margin-top: 5px; padding-top: 2px; border: 1px solid #0071a1; border-radius: 4px; background: #f3f5f6; color: #0071a1; font-size: 15.4px; }
.menu { margin-top: 19px; list-style: none; }
.menu li { height: 54.5px; padding: 0 20px 0 17.5px; display: flex; align-items: center; justify-content: space-between; border-left: 5px solid #fff; border-bottom: 1px solid #ddd; background: #fff; font-size: 16.5px; font-weight: 600; }
.menu span { padding-top: 1px; }
.menu svg { width: 11px; height: 17px; fill: none; stroke: #a0a5aa; stroke-width: 2.8; }
.menu .current { background: #f3f3f5; border-left-color: #0073aa; color: #0073aa; }
.menu .current span { letter-spacing: .15px; }
.menu .current svg { stroke: #0073aa; }
.side-foot { height: 57px; margin-top: auto; display: flex; align-items: center; padding-left: 17.5px; border-top: 1px solid #ddd; }
.collapse { width: 20px; height: 20px; }
.hide { width: 166.5px; margin-left: 13px; padding-top: 2px; font-size: 15.4px; color: #777c82; }
.device { width: 52.500px; height: 56px; display: flex; align-items: center; justify-content: center; }
.device.on { border-bottom: 5px solid #191e23; padding-top: 5px; }
.device svg { width: 25px; height: 25px; margin-left: 1px; }

/* site preview */
.preview { width: 1524px; padding-left: 2px; font-family: "Inter", sans-serif; overflow: hidden; }
.site-head { height: 184px; padding-left: 48px; display: flex; align-items: center; }
.logo { position: relative; width: 88px; height: 112px; margin-top: -2px; }
.logo > svg { width: 88px; height: 112px; }
.edit { position: absolute; width: 37px; height: 37px; border: 3px solid #fff; border-radius: 50%; background: #0085ba; box-shadow: 0 2px 1px #2e44534d; display: flex; align-items: center; justify-content: center; }
.edit svg { width: 23px; height: 23px; }
.edit-logo { left: -38px; top: 1px; }
.edit-tagline { left: 80px; top: 43.500px; }
.tagline { width: 702px; margin-left: 30px; font-size: 22.5px; font-weight: 400; letter-spacing: -.65px; line-height: 30px; color: #6d6d6d; white-space: nowrap; }
.site-nav { display: flex; gap: 32px; width: 394px; font-size: 22.3px; font-weight: 500; letter-spacing: -.65px; line-height: 30px; color: #cd2653; }
.toggle { position: relative; height: 34px; width: 132.5px; padding-right: 3.5px; border-left: 2px solid #dcd7ca; display: flex; flex-direction: column; align-items: center; font-size: 15px; font-weight: 600; color: #6d6d6d; }
.t-search { width: 128px; padding-right: 3px; }
.toggle svg { width: 34px; height: 34px; }
.toggle span { line-height: 20px; margin-top: 5px; letter-spacing: -.0277em; }
h1 { height: 436px; padding: 98px 5px 0 0; width: 1524px; text-align: center; font-size: 105px; font-weight: 800; line-height: 119px; letter-spacing: -.036em; word-spacing: -3.3px; color: #000; }
.tight { letter-spacing: -.0515em; }
.hero { width: 1500px; height: 234px; background: #bd3854; }
.scrollbar { width: 21px; padding: 9px 2px 0; background: #f1f1f1; display: flex; flex-direction: column; align-items: center; }
.scrollbar svg { width: 10px; height: 6px; }
.thumb { width: 17px; height: 82px; margin-top: 6px; background: #c1c1c1; }
.scrollbar .down { margin-top: auto; margin-bottom: 8px; }

/* downloads */
.downloads { height: 59px; padding-left: 20px; display: flex; align-items: center; background: #f7f7f7; border-top: 1px solid #ccc; }
.rar { width: 20px; height: 17px; }
.dl-text { width: 195px; margin: -4px 0 0 15px; display: flex; flex-direction: column; font-size: 14.1px; line-height: 22px; color: #111; }
.dl-open { margin-left: 3px; color: #0078d4; text-decoration: underline; }
.dl-more { width: 20px; height: 20px; }
.dl-sep { width: 1px; height: 40px; margin-left: 18px; background: #ccc; }
.show-all { width: 98px; height: 40px; margin-left: auto; padding: 0 0 3px; border: 0; border-radius: 2px; background: #e5e5e5; font-size: 14.5px; color: #111; }
.dl-x { width: 14px; height: 14px; margin: 0 18px 0 17px; }

/* taskbar */
.taskbar { height: 38px; display: flex; color: #fff; background: linear-gradient(90deg, #1d303b 0, #16303c 220px, #1b2f37 600px, #222f33 800px, #1a2a32 1000px, #121f28 1250px, #0e1c22 1600px, #04191f 1920px); }
.start { width: 637px; padding-left: 12px; display: flex; align-items: center; gap: 25px; }
.start svg { width: 20px; height: 20px; }
.links { margin-left: -8px; padding-bottom: 2px; font-size: 13.8px; color: #ccd2d5; }
.apps { display: flex; }
.app { width: 46px; height: 38px; display: flex; align-items: center; justify-content: center; }
.app svg { width: 20px; height: 20px; }
.run { background: linear-gradient(#ffdcb0, #ffdcb0) center bottom / 35px 3px no-repeat; }
.focus { width: 45px; background: linear-gradient(#ffdcb0, #ffdcb0) center bottom / 45px 3px no-repeat, #53626a; }
.tray { margin-left: auto; display: flex; align-items: center; font-size: 14.1px; }
.tray svg { width: 20px; height: 20px; margin-right: 10px; }
.tray .lang { margin-left: 3px; width: 50px; }
.tray .clock { width: 80px; white-space: nowrap; }
.tray .notif { margin-right: 25px; }
.peek { width: 6px; height: 38px; border-left: 1px solid #66757a; }
```
